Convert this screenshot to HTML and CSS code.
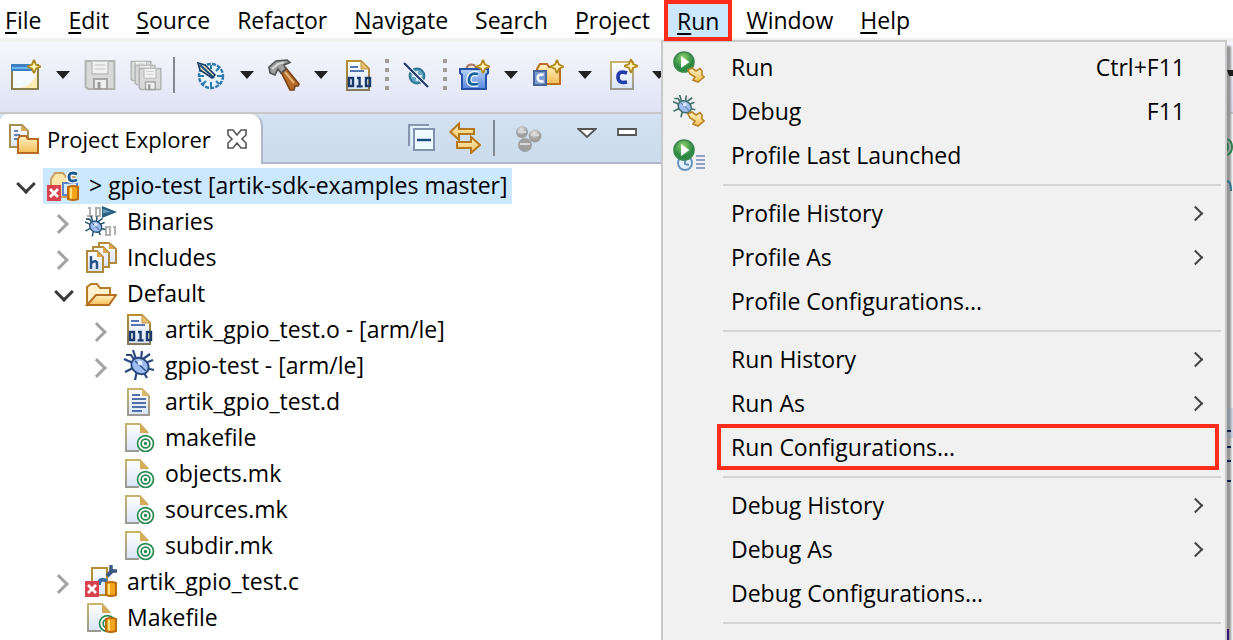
FILE: index.html
```html
<!DOCTYPE html>
<html lang="en">
<head>
<meta charset="utf-8">
<title>Project Explorer</title>
<link rel="stylesheet" href="styles.css">
</head>
<body>
<svg class="sprites" aria-hidden="true">
  <defs>
    <linearGradient id="gold" x1="0" y1="0" x2="0" y2="1"><stop offset="0" stop-color="#fff3c4"/><stop offset="1" stop-color="#f3bd58"/></linearGradient>
    <linearGradient id="paper" x1="0" y1="0" x2="0" y2="1"><stop offset="0" stop-color="#ffffff"/><stop offset="1" stop-color="#d8e4f6"/></linearGradient>
    <linearGradient id="edge" x1="0" y1="0" x2="0" y2="1"><stop offset="0" stop-color="#b98f32"/><stop offset="1" stop-color="#857a58"/></linearGradient>
    <linearGradient id="pale" x1="0" y1="0" x2="0" y2="1"><stop offset="0" stop-color="#c9b36a"/><stop offset="1" stop-color="#9a9a92"/></linearGradient>
    <linearGradient id="blue" x1="0" y1="0" x2="0" y2="1"><stop offset="0" stop-color="#b4d4fa"/><stop offset="1" stop-color="#5a86e0"/></linearGradient>
    <radialGradient id="green" cx=".45" cy=".3"><stop offset="0" stop-color="#8fd070"/><stop offset="1" stop-color="#2c8a44"/></radialGradient>
    <radialGradient id="ball" cx=".45" cy=".3"><stop offset="0" stop-color="#e6e6e6"/><stop offset="1" stop-color="#9c9c9c"/></radialGradient>
    <symbol id="star" viewBox="0 0 7 7"><path d="M3.5 0 4.5 2.5 7 3.5 4.5 4.5 3.5 7 2.5 4.5 0 3.5 2.5 2.5Z" fill="#fff2b8" stroke="#b18a1c" stroke-width=".9"/></symbol>
    <symbol id="page" viewBox="0 0 16 16"><path d="M2.5 1H9.5L13.5 5V15.5H2.5Z" fill="url(#paper)" stroke="url(#edge)"/><path d="M9.5 1V5H13.5Z" fill="#e9bd6a" stroke="#c39a47" stroke-width=".5"/></symbol>
    <symbol id="badge-x" viewBox="0 0 7 8"><path d="M0 0H7V8H0Z" fill="#d9414e"/><path d="M1.5 2 5.5 6M5.5 2 1.5 6" stroke="#fff" stroke-width="1.4"/></symbol>
    <symbol id="badge-db" viewBox="0 0 6 8"><path d="M.5 1Q3 0 5.5 1V7Q3 8 .5 7Z" fill="#f4a51c" stroke="#bc6c08"/><path d="M2 1.4V6.8" stroke="#ffe07a"/></symbol>
    <symbol id="target" viewBox="0 0 10 10"><circle cx="5" cy="5" r="4.9" fill="#fff"/><g fill="none" stroke="#27894f"><circle cx="5" cy="5" r="4.2" stroke-width=".9"/><circle cx="5" cy="5" r="2.3" stroke-width=".9"/></g><circle cx="5" cy="5" r=".9" fill="#27894f"/></symbol>
    <symbol id="bug" viewBox="0 0 16 16"><path d="M.5 5 5 7M1 11.500 5 9.500M5 .5 6.500 5M9.500 1 9 5M15 5.500 11 7M15.500 10.500 11 9.500M6 15.500 7 11M12 14.500 10 11M1.500 3H4L6 6M13.500 2.500 10 5" fill="none" stroke="currentColor" stroke-width="1.100"/><ellipse cx="8.500" cy="8.500" rx="4.600" ry="3.800" transform="rotate(35 8.500 8.500)" fill="#9fbdf2" stroke="currentColor"/><path d="M6 6 11.500 11" stroke="currentColor" stroke-width=".6"/><circle cx="8.500" cy="7" r="1.200" fill="#e2edff"/></symbol>
    <symbol id="arrow-y" viewBox="0 0 9 8"><path d="M.5 1.500 2.500 .5 4.500 2 6.500 .8 7.500 2V4L8.500 5 5.500 7.500 3 6.500 4 5 1.500 3.500Z" fill="url(#gold)" stroke="#b98324" stroke-width=".8"/></symbol>
    <symbol id="play" viewBox="0 0 11 11"><circle cx="5.500" cy="5.500" r="5" fill="url(#green)" stroke="#39874b" stroke-width=".8"/><path d="M4 2.500 8.200 5.500 4 8.500Z" fill="#fff"/></symbol>
    <symbol id="new" viewBox="0 0 16 16"><path d="M1 3H14V15H1Z" fill="#f4fbff" stroke="#8a8050"/><path d="M.5 2.500H12V6H.5Z" fill="#3f7fc0"/><path d="M1 4.500H12" stroke="#66b8f0"/><path d="M5 14.500Q12 13 13.500 6V14.500Z" fill="#fbedb5"/><use href="#star" x="8.500" y=".3" width="7" height="7"/></symbol>
    <symbol id="save" viewBox="0 0 16 16"><path d="M.8 1H15.200V15H2L.8 14Z" fill="#d9d9d9" stroke="#b2b2b2"/><path d="M4 1H12V7.500H4Z" fill="#f1f1f1" stroke="#bbb" stroke-width=".7"/><path d="M5.500 3H10.500M5.500 5H10.500" stroke="#d2d2d2" stroke-width=".8"/><path d="M5 10H11.500V15H5Z" fill="#eee" stroke="#a6a6a6"/><path d="M7.500 11.500V15" stroke="#999" stroke-width="1.500"/></symbol>
    <symbol id="disk" viewBox="0 0 16 16"><use href="#save"/></symbol>
    <symbol id="gauge" viewBox="0 0 16 16"><circle cx="8.500" cy="8.500" r="6" fill="#e9f5ff" stroke="#2d78ae" stroke-width="1.200" stroke-dasharray="2 .6"/><path d="M8.500 3V5M14 8.500H11.500M8.500 14V11.500M3 8.500H5M12.500 4.500 11 6M12.500 12.500 11 11M4.500 12.500 6 11" stroke="#2d78ae"/><path d="M2 2 5.500 3 10.500 8 9 9.500 3 5.500Z" fill="#e6dfb4" stroke="#173b68" stroke-width=".8"/><path d="M3 3 10 9.500" stroke="#1c4c80"/></symbol>
    <symbol id="hammer" viewBox="0 0 16 16"><path d="M6.500 6.500 9 4.500 15.500 12.500 15 13.500 13.500 13.500 13 15.500H11Z" fill="#b56c2b" stroke="#754014" stroke-width=".8"/><path d="M8.500 6.500 13 12" stroke="#e4b276"/><path d="M.5 4 4 1 9.500 .5 11 1.800 8 3 9 5 6.500 7 5 5 3.500 8 1 7Z" fill="#a0a0a0" stroke="#515151" stroke-width=".8"/><path d="M2 5 5 2.500 8 1.700" stroke="#d9d9d9" fill="none"/></symbol>
    <symbol id="object" viewBox="0 0 16 16"><use href="#page"/><path d="M4 4H8M4 6H11" stroke="#5775b0"/><g fill="none" stroke="#193b6b" stroke-width="1.200"><rect x="3.500" y="9.500" width="2" height="4"/><path d="M7.500 9.500H8.800V14M7.300 13.700H10.300"/><rect x="12" y="9.500" width="2" height="4"/></g></symbol>
    <symbol id="skip" viewBox="0 0 16 16"><circle cx="8.500" cy="8.500" r="3.700" fill="#65a7c2" stroke="#2f7694"/><path d="M6 8.500H11M8.500 6V11" stroke="#c8e9f3"/><path d="M2 2 14 14" stroke="#fff" stroke-width="2"/><path d="M2 2 14 14" stroke="#263d77" stroke-width="1.200"/></symbol>
    <symbol id="cproject" viewBox="0 0 16 16"><path d="M4 5Q5 2 8 3L9.500 5" fill="#f8dfc8" stroke="#a67869"/><path d="M1 5H15V7L14 8V15H2V8L1 7Z" fill="url(#blue)" stroke="#2851a8"/><path d="M10 7.500Q6 6.500 5.500 10T10 12.500" stroke="#fff" stroke-width="2.600" fill="none"/><path d="M10 7.500Q6 6.500 5.500 10T10 12.500" stroke="#17639d" stroke-width="1.400" fill="none"/><use href="#star" x="9" y=".3" width="7" height="7"/></symbol>
    <symbol id="cfolder" viewBox="0 0 16 16"><path d="M2.500 5 4 2.500H7.500L8.500 4H14V12.500H2.500Z" fill="url(#gold)" stroke="#bc6d21"/><path d="M1 6H7V13H1Z" fill="#7c9cd2" stroke="#48659b"/><path d="M5.800 7.800Q2.800 7.500 2.800 9.500T5.800 11.200" fill="none" stroke="#fff" stroke-width="1.200"/><use href="#star" x="9" y=".3" width="7" height="7"/></symbol>
    <symbol id="cfile" viewBox="0 0 16 16"><path d="M2.500 1.500H13.500V15H2.500Z" fill="url(#paper)" stroke="url(#pale)"/><path d="M10.500 7Q6 5.500 6 9T10.500 11.500" fill="none" stroke="#223bad" stroke-width="1.800"/><use href="#star" x="9" y="0" width="7" height="7"/></symbol>
    <symbol id="explorer" viewBox="0 0 16 16"><path d="M1 1H7L10 4V12H1Z" fill="url(#paper)" stroke="#a58e50"/><path d="M6.500 1V4H10Z" fill="#d9ae57"/><path d="M3 4H5M3 6H6M3 8H5" stroke="#6582b7"/><path d="M5 8 6 6.500H9L10 8H15V15H5Z" fill="url(#gold)" stroke="#b76a20"/></symbol>
    <symbol id="collapse" viewBox="0 0 16 16"><path d="M2 12V1.500H12" fill="none" stroke="#8795ad"/><path d="M3 2H12V12H3Z" fill="#dff2fb"/><path d="M4.500 3.500H14.500V14H4.500Z" fill="#eefaff" stroke="#8092b0"/><path d="M6 9H13" stroke="#164a83" stroke-width="1.200"/></symbol>
    <symbol id="link" viewBox="0 0 16 16"><path d="M.7 5 5 .8V3.500H12.500V6H5V9Z" fill="url(#gold)" stroke="#b67718"/><path d="M15.500 11.500 11 7.500V10H4V13H11V15.500Z" fill="url(#gold)" stroke="#b67718"/></symbol>
    <symbol id="focus" viewBox="0 0 16 16"><circle cx="4.500" cy="5" r="3" fill="url(#ball)"/><circle cx="11" cy="7" r="3.200" fill="url(#ball)"/><circle cx="6" cy="11.500" r="3.500" fill="#9f9f9f"/><path d="M2.500 5H6.500M9 6.500H13M3.500 11H8.500" stroke="#d8d8d8"/></symbol>
    <symbol id="project" viewBox="0 0 16 16"><path d="M2 5 4 2H8L9.500 4H14V10L11 14H2Z" fill="#fae6ab" stroke="#c8a262"/><path d="M8 7H15V13H8Z" fill="#d8eaff" stroke="#5b86cc"/><path d="M15 2.500Q11 1 11 4T15 5.500" stroke="#fff" stroke-width="2.800" fill="none"/><path d="M15 2.500Q11 1 11 4T15 5.500" stroke="#165791" stroke-width="1.400" fill="none"/><use href="#badge-x" x="0" y="8" width="7" height="8"/><use href="#badge-db" x="10" y="8" width="6" height="8"/></symbol>
    <symbol id="binaries" viewBox="0 0 16 16"><g fill="none" stroke="#b1b1b1"><path d="M2.500 1V5.500M1.500 1.500H2.500M1 5.500H4"/><rect x="5.500" y="1.500" width="2" height="4"/><rect x="10.500" y="11" width="2" height="4"/><path d="M15 10.500V15M14 11H15"/></g><path d="M8.500 .5 16 3.500 8.500 6.500Z" fill="#286082"/><path d="M9 2 13 3.500 9 4Z" fill="#6fa1bd"/><g color="#26506f"><use href="#bug" x="-1" y="5" width="12" height="11"/></g></symbol>
    <symbol id="includes" viewBox="0 0 16 16"><g fill="url(#paper)" stroke="#b38a3b"><path d="M7 1H12L15.500 4V11H7Z"/><path d="M4 3H9L12 6V13H4Z"/><path d="M1 5H6L9 8V15.500H1Z"/></g><path d="M12 1V4H15ZM9 3V6H12ZM6 5V8H9Z" fill="#dda64b"/><path d="M3 7.500V14M3 11Q6 9 6 11.500V14" fill="none" stroke="#275287" stroke-width="1.200"/></symbol>
    <symbol id="folder" viewBox="0 0 16 16"><path d="M1 14V5L3 3.500H6L7.500 5.500H12.500V9" fill="#fff2cc" stroke="#b87b29"/><path d="M1 14 5.500 9H15.500L12 14Z" fill="url(#gold)" stroke="#b66d20"/></symbol>
    <symbol id="text" viewBox="0 0 16 16"><path d="M2.500 2H9.500L13 5.500V15H2.500Z" fill="url(#paper)" stroke="url(#pale)"/><path d="M9.500 2V5.500H13Z" fill="#dcb869"/><path d="M4.500 5H8.500M4.500 7H11.500M4.500 9H11.500M4.500 11H11.500M4.500 13H9.500" stroke="#5470aa" stroke-width=".9"/></symbol>
    <symbol id="make" viewBox="0 0 16 16"><path d="M8.500 1.500H1.500V15H12.500V6Z" fill="url(#paper)"/><path d="M12.500 6 8.500 1.500H1.500V15H8" fill="none" stroke="url(#pale)"/><path d="M8.500 1.500V6H13Z" fill="#d6ad57"/><use href="#target" x="6.500" y="6.500" width="9.500" height="9.500"/></symbol>
    <symbol id="csource" viewBox="0 0 16 16"><path d="M3.500 1.500H11V15H3.500Z" fill="url(#paper)" stroke="#b98f35"/><path d="M11 8Q7 6 7 10" fill="none" stroke="#3b6da8" stroke-width="2"/><path d="M11 5.500 14 2.500" stroke="#3c5784" stroke-width="2"/><path d="M13 0V3H16" stroke="#3c5784" stroke-width="1.700" fill="none"/><use href="#badge-x" x="0" y="8" width="7" height="8"/><use href="#badge-db" x="10" y="8" width="6" height="8"/></symbol>
    <symbol id="makedb" viewBox="0 0 16 16"><use href="#make"/><use href="#badge-db" x="10" y="8" width="6" height="8"/></symbol>
    <symbol id="m-run" viewBox="0 0 16 16"><use href="#play" x="0" y="0" width="11" height="11"/><use href="#arrow-y" x="7" y="8" width="9" height="8"/></symbol>
    <symbol id="m-debug" viewBox="0 0 16 16"><g color="#43716c"><use href="#bug" x="-.5" y="-.5" width="12" height="12"/></g><use href="#arrow-y" x="7" y="8" width="9" height="8"/></symbol>
    <symbol id="m-profile" viewBox="0 0 16 16"><circle cx="6" cy="12" r="3.500" fill="#e2f2ff" stroke="#6796bf"/><path d="M6 10.500V12.500L8 13" fill="none" stroke="#6796bf"/><use href="#play" x="0" y="0" width="11" height="11"/><path d="M11.500 8.500H16M11.500 10.500H16M11.500 12.500H16M11.500 14.500H16" stroke="#7187b5" stroke-width=".8"/></symbol>
  </defs>
</svg>

<div class="window">
  <nav class="menubar" aria-label="Main menu">
    <button><u>F</u>ile</button><button><u>E</u>dit</button><button><u>S</u>ource</button><button>Refac<u>t</u>or</button><button><u>N</u>avigate</button><button>Se<u>a</u>rch</button><button><u>P</u>roject</button><button class="open" aria-expanded="true"><u>R</u>un</button><button><u>W</u>indow</button><button><u>H</u>elp</button>
  </nav>

  <div class="toolbar" role="toolbar" aria-label="Workbench">
    <button aria-label="New"><svg class="icon"><use href="#new"/></svg></button>
    <button class="drop" aria-label="New options"></button>
    <button aria-label="Save" disabled><svg class="icon"><use href="#save"/></svg></button>
    <button class="save-all" aria-label="Save all" disabled><svg class="icon" viewBox="0 0 16 16"><use href="#disk" x="0" y="0" width="11" height="12"/><use href="#disk" x="2" y="2" width="11" height="12"/><use href="#disk" x="4" y="4" width="12" height="12"/></svg></button>
    <span class="rule"></span>
    <button aria-label="Build target"><svg class="icon"><use href="#gauge"/></svg></button>
    <button class="drop" aria-label="Target options"></button>
    <button aria-label="Build"><svg class="icon"><use href="#hammer"/></svg></button>
    <button class="drop" aria-label="Build options"></button>
    <button aria-label="Binary"><svg class="icon"><use href="#object"/></svg></button>
    <span class="dots"></span>
    <button aria-label="Skip breakpoints"><svg class="icon"><use href="#skip"/></svg></button>
    <span class="dots"></span>
    <button aria-label="New C project"><svg class="icon"><use href="#cproject"/></svg></button>
    <button class="drop" aria-label="Project options"></button>
    <button aria-label="New source folder"><svg class="icon"><use href="#cfolder"/></svg></button>
    <button class="drop" aria-label="Folder options"></button>
    <button aria-label="New C file"><svg class="icon"><use href="#cfile"/></svg></button>
    <button class="drop" aria-label="File options"></button>
  </div>

  <div class="workbench">
    <section class="explorer">
      <header class="tabs">
        <div class="tab"><svg class="icon"><use href="#explorer"/></svg><span>Project Explorer</span>
          <button aria-label="Close"><svg class="close" viewBox="0 0 10 10"><path d="M.5.5H3L5 3 7 .5H9.500V3L7.500 5 9.500 7V9.500H7L5 7 3 9.500H.5V7L2.500 5 .5 3Z" fill="#fff" stroke="#555" stroke-width=".8"/></svg></button></div>
        <div class="tools">
          <button aria-label="Collapse all"><svg class="icon"><use href="#collapse"/></svg></button>
          <button aria-label="Link with editor"><svg class="icon"><use href="#link"/></svg></button>
          <span class="rule"></span>
          <button aria-label="Focus"><svg class="icon"><use href="#focus"/></svg></button>
          <button class="view" aria-label="View menu"><svg viewBox="0 0 10 5"><path d="M.7.5H9.300L5 4.500Z" fill="#fff" stroke="#555" stroke-width=".9"/></svg></button>
          <button class="view" aria-label="Minimize"><svg viewBox="0 0 10 5"><path d="M.5.5H9.500V3.500H.5Z" fill="#fff" stroke="#555" stroke-width=".9"/></svg></button>
        </div>
      </header>
      <ul class="tree" role="tree">
        <li class="l0" role="treeitem"><i class="twist down"></i><span class="label selected"><svg class="icon"><use href="#project"/></svg>&gt; gpio-test [artik-sdk-examples master]</span></li>
        <li class="l1" role="treeitem"><i class="twist"></i><span class="label"><svg class="icon"><use href="#binaries"/></svg>Binaries</span></li>
        <li class="l1" role="treeitem"><i class="twist"></i><span class="label"><svg class="icon"><use href="#includes"/></svg>Includes</span></li>
        <li class="l1" role="treeitem"><i class="twist down"></i><span class="label"><svg class="icon"><use href="#folder"/></svg>Default</span></li>
        <li class="l2" role="treeitem"><i class="twist"></i><span class="label"><svg class="icon"><use href="#object"/></svg>artik_gpio_test.o - [arm/le]</span></li>
        <li class="l2" role="treeitem"><i class="twist"></i><span class="label"><svg class="icon"><use href="#bug"/></svg>gpio-test - [arm/le]</span></li>
        <li class="l2" role="treeitem"><i class="twist none"></i><span class="label"><svg class="icon"><use href="#text"/></svg>artik_gpio_test.d</span></li>
        <li class="l2" role="treeitem"><i class="twist none"></i><span class="label"><svg class="icon"><use href="#make"/></svg>makefile</span></li>
        <li class="l2" role="treeitem"><i class="twist none"></i><span class="label"><svg class="icon"><use href="#make"/></svg>objects.mk</span></li>
        <li class="l2" role="treeitem"><i class="twist none"></i><span class="label"><svg class="icon"><use href="#make"/></svg>sources.mk</span></li>
        <li class="l2" role="treeitem"><i class="twist none"></i><span class="label"><svg class="icon"><use href="#make"/></svg>subdir.mk</span></li>
        <li class="l1" role="treeitem"><i class="twist"></i><span class="label"><svg class="icon"><use href="#csource"/></svg>artik_gpio_test.c</span></li>
        <li class="l1" role="treeitem"><i class="twist none"></i><span class="label"><svg class="icon"><use href="#makedb"/></svg>Makefile</span></li>
      </ul>
    </section>
    <section class="editor" aria-label="Editor"></section>
  </div>

  <div class="menu" role="menu" aria-label="Run">
    <button role="menuitem"><svg class="icon"><use href="#m-run"/></svg><span>Run</span><kbd>Ctrl+F11</kbd></button>
    <button role="menuitem"><svg class="icon"><use href="#m-debug"/></svg><span>Debug</span><kbd>F11</kbd></button>
    <button role="menuitem"><svg class="icon"><use href="#m-profile"/></svg><span>Profile Last Launched</span></button>
    <hr>
    <button class="sub" role="menuitem"><span>Profile History</span></button>
    <button class="sub" role="menuitem"><span>Profile As</span></button>
    <button role="menuitem"><span>Profile Configurations...</span></button>
    <hr>
    <button class="sub" role="menuitem"><span>Run History</span></button>
    <button class="sub" role="menuitem"><span>Run As</span></button>
    <button class="marked" role="menuitem"><span>Run Configurations...</span></button>
    <hr>
    <button class="sub" role="menuitem"><span>Debug History</span></button>
    <button class="sub" role="menuitem"><span>Debug As</span></button>
    <button role="menuitem"><span>Debug Configurations...</span></button>
    <hr>
  </div>
  <svg class="fringe" viewBox="0 0 6 640" aria-hidden="true"><path d="M0 70H6V76H2Z" fill="#1c1c1c"/><path d="M0 139Q5 141 5 147T0 155M0 143Q2 147 0 151" fill="none" stroke="#327950" stroke-width="2"/><path d="M0 181Q4 181 4 191" fill="none" stroke="#316f88" stroke-width="2"/><path d="M0 408H6V438H0Z" fill="#7190b8" opacity=".25"/><path d="M0 431H4M0 447H4M0 461H4M0 481H4" stroke="#101c4c" stroke-width="2"/><path d="M0 629V640" stroke="#321477" stroke-width="4"/></svg>
</div>
</body>
</html>
```

FILE: styles.css
```css
* { box-sizing: border-box; }
body { margin: 0; background: #fff; color: #000; font: 23px/34px "Open Sans", "Noto Sans", sans-serif; overflow: hidden; }
button { font: inherit; color: inherit; background: none; border: 0; padding: 0; }
.sprites { position: absolute; width: 0; height: 0; }
.window { position: relative; min-height: 100vh; display: flex; flex-direction: column; overflow: hidden; }
.icon { display: block; flex: none; width: 32px; height: 32px; color: #28497f; }

.menubar { display: flex; gap: 1px; height: 42px; border-bottom: 4px solid #f0f0f0; padding-bottom: 2px; white-space: nowrap; }
.menubar button { flex: none; padding: 4px 13px 0; line-height: 32px; }
.menubar button:first-child { padding-left: 5px; }
.menubar u { text-decoration-thickness: 2px; text-underline-offset: 3px; text-decoration-skip-ink: none; }
.menubar .open { position: relative; z-index: 3; height: 41px; padding: 0 9px; background: #cce8ff; border: 4px solid #fb2c1c; }

.toolbar { display: flex; align-items: center; height: 72px; padding: 0 0 4px 10px; background: linear-gradient(#f6f7fc, #dfe3f5); border-bottom: 2px solid #c8c8c8; }
.drop { width: 42px; height: 32px; display: flex; flex: none; align-items: center; justify-content: center; }
.drop::before { content: ""; border: 7px solid transparent; border-top: 8px solid #202020; border-bottom: 0; }
.save-all { margin-left: 14px; }
.rule { width: 2px; height: 36px; background: #83878f; margin: 0 19px 0 11px; }
.dots { width: 4px; height: 32px; margin: 0 11px; background: repeating-linear-gradient(#a29d94 0 4px, transparent 4px 9px); }

.workbench { flex: 1; display: flex; }
.explorer { width: 661px; flex: none; }
.editor { flex: 1; background: #f4f5f8; }
.tabs { display: flex; height: 50px; background: linear-gradient(#d3e1f0, #ccdcec); border-bottom: 2px solid #b0b6ca; }
.tab { display: flex; align-items: center; width: 263px; height: 50px; padding-left: 8px; background: #fff; border: solid #b0b6ca; border-width: 0 2px 0 0; border-radius: 8px 12px 0 0; font-size: 22px; white-space: nowrap; }
.tab span { width: 180px; padding-left: 7px; }
.close { display: block; width: 20px; height: 20px; }
.tab button { margin-left: 7px; }
.tools { flex: 1; display: flex; align-items: center; justify-content: flex-end; padding-right: 24px; }
.tools .icon { margin-right: 12px; }
.tools .rule { margin: 0 18px 0 0; }
.view { align-self: flex-start; margin: 14px 0 0 20px; }
.view svg { display: block; width: 20px; height: 10px; }

.tree { margin: 0; padding: 4px 0 0; list-style: none; }
.tree li { display: flex; height: 36px; padding-left: 8px; }
.tree .l1 { padding-left: 46px; }
.tree .l2 { padding-left: 84px; }
.twist { width: 35px; display: flex; align-items: center; padding: 4px 0 0 6px; }
.twist::before { content: ""; width: 11px; height: 11px; border: solid #a3a3a3; border-width: 3px 3px 0 0; transform: rotate(45deg); }
.twist.down { padding: 0 0 4px 11px; }
.twist.down::before { border-color: #3c3c3c; transform: rotate(135deg); }
.twist.none::before { display: none; }
.label { display: flex; align-items: center; gap: 10px; padding: 0 4px 2px; white-space: nowrap; }
.selected { background: #cce8ff; }

.menu { position: absolute; z-index: 2; top: 40px; left: 661px; right: 6px; padding: 4px 0; min-height: 610px; background: #f1f1f1; border: 2px solid #c9c9c9; box-shadow: 4px 6px 2px #949494; }
.menu button { display: grid; grid-template-columns: 58px 1fr auto; align-items: center; width: 100%; height: 44px; padding: 0 40px 2px 10px; text-align: left; white-space: nowrap; }
.menu span { grid-column: 2; }
.menu kbd { font: inherit; }
.menu .sub { padding-right: 24px; }
.menu .sub::after { content: ""; grid-column: 3; width: 9px; height: 9px; border: solid #444; border-width: 2px 2px 0 0; transform: rotate(45deg); }
.menu .marked { width: calc(100% - 60px); height: 46px; margin: -2px 0 0 54px; padding: 0 0 0 10px; display: block; border: 4px solid #fb2c1c; line-height: 38px; }
.menu hr { height: 2px; margin: 6px 4px 6px 60px; border: 0; background: #d4d4d4; }
.fringe { position: absolute; z-index: 3; top: 0; right: 0; width: 6px; height: 640px; }
```
